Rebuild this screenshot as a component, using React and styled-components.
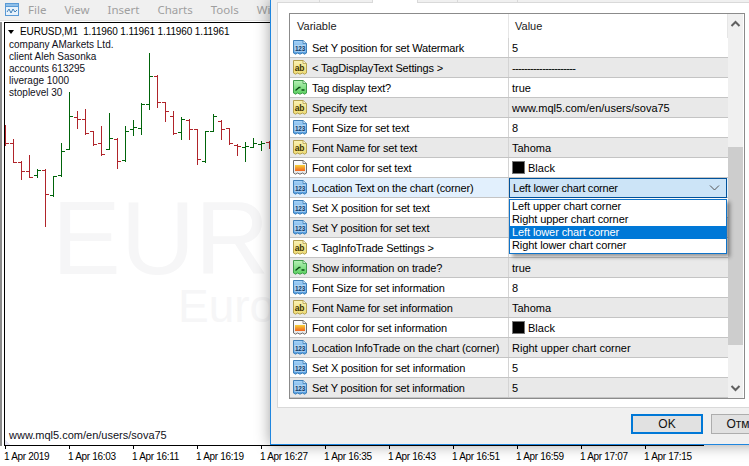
import React from "react";
import styled, { createGlobalStyle } from "styled-components";

const Global = createGlobalStyle`
  html, body { margin: 0; padding: 0; background: #fff; overflow: hidden; }
  #root { width: 749px; height: 466px; }
`;

const Page = styled.div`
  position: relative;
  width: 749px;
  height: 466px;
  overflow: hidden;
  background: #fff;
  font-family: "Liberation Sans", Arial, sans-serif;
  color: #000;
`;

const MenuBar = styled.div`
  height: 18px;
  display: flex;
  align-items: center;
  gap: 18px;
  padding: 0 0 2px 5px;
  background: #f0f0f0;
  border-bottom: 1px solid #e2e2e2;
  font-family: "Noto Sans", sans-serif;
  font-size: 11.5px;
  color: #9f9f9f;
`;

const MenuIcon = styled.svg`
  width: 15px;
  height: 15px;
  margin-right: -10px;
`;

const Workspace = styled.div`
  margin-top: 1px;
  padding-left: 4px;
  position: relative;
  &::before {
    content: "";
    position: absolute;
    left: 0;
    top: 0;
    width: 2px;
    height: 424px;
    background: #8c8c8c;
  }
`;

const ChartFrame = styled.div`
  position: relative;
  width: 699px;
  height: 422px;
  border-top: 1px solid #000;
  border-left: 1px solid #000;
  border-bottom: 1px solid #000;
  overflow: hidden;
`;

const ChartSvg = styled.svg`
  display: block;
`;

const Watermark = styled.div`
  position: absolute;
  white-space: nowrap;
  color: #f6f6f7;
  font-size: ${(p) => (p.$small ? "46px" : "103px")};
  left: ${(p) => (p.$small ? "173px" : "47px")};
  top: ${(p) => (p.$small ? "257px" : "157px")};
  line-height: 1.15;
`;

const ChartTitle = styled.div`
  position: absolute;
  left: 15px;
  top: 2px;
  font-size: 10px;
  line-height: 13px;
  white-space: pre;
  letter-spacing: -0.12px;
`;

const TitleArrow = styled.span`
  position: absolute;
  left: 3px;
  top: 7px;
  width: 0;
  height: 0;
  border-left: 3.5px solid transparent;
  border-right: 3.5px solid transparent;
  border-top: 4px solid #000;
`;

const InfoBlock = styled.div`
  position: absolute;
  left: 4px;
  top: 16px;
  font-size: 10px;
  line-height: 12px;
  color: #101020;
`;

const SiteLabel = styled.div`
  position: absolute;
  left: 4px;
  bottom: 3px;
  font-size: 11px;
  line-height: 14px;
  color: #101020;
`;

const Axis = styled.div`
  display: flex;
`;

const AxisCell = styled.div`
  flex: 0 0 64px;
  display: flex;
  flex-direction: column;
`;

const AxisTick = styled.span`
  width: 1px;
  height: 3px;
  margin-left: 1px;
  background: #000;
`;

const AxisLabel = styled.span`
  font-size: 10px;
  letter-spacing: -0.3px;
  line-height: 13px;
  margin-top: 1px;
  white-space: nowrap;
`;

const Dialog = styled.div`
  position: absolute;
  left: 270px;
  top: 0;
  width: 530px;
  height: 445px;
  box-sizing: border-box;
  background: #f0f0f0;
  border-left: 1px solid #1f86df;
  border-bottom: 1px solid #1f86df;
  box-shadow: 0 0 14px rgba(0, 0, 0, 0.38);
  display: flex;
  flex-direction: column;
`;

const TabStrip = styled.div`
  height: 2px;
  display: flex;
`;

const Tab = styled.div`
  flex: 0 0 ${(p) => p.$w}px;
  box-sizing: border-box;
  background: ${(p) => (p.$active ? "#fff" : "#f0f0f0")};
  border-right: 1px solid #d9d9d9;
  height: ${(p) => (p.$active ? "3px" : "2px")};
  position: relative;
  z-index: 1;
`;

const TabPanel = styled.div`
  margin-left: 6px;
  height: 406px;
  box-sizing: border-box;
  background: #fff;
  border: 1px solid #d9d9d9;
  padding: 10px 0 0 11px;
`;

const PropTable = styled.div`
  width: 456px;
  height: 386px;
  box-sizing: border-box;
  border: 1px solid #8b8b8b;
  display: flex;
  background: #fff;
`;

const PropList = styled.div`
  width: 438px;
  font-size: 11px;
  position: relative;
`;

const HeaderRow = styled.div`
  height: 24px;
  display: grid;
  grid-template-columns: 219px 219px;
  align-items: center;
  color: #222;
`;

const HeaderCell = styled.div`
  height: 100%;
  display: flex;
  align-items: center;
  padding-left: ${(p) => p.$pad}px;
  box-sizing: border-box;
  border-right: 1px solid #e6e6e6;
`;

const Row = styled.div`
  height: 20px;
  box-sizing: border-box;
  display: grid;
  grid-template-columns: 219px 219px;
  border-bottom: 1px solid #c4c4c4;
  background: ${(p) => (p.$selected ? "#e2f0fd" : p.$shaded ? "#e9e9e9" : "#fff")};
`;

const NameCell = styled.div`
  display: flex;
  align-items: center;
  gap: 4px;
  padding-left: 2px;
  box-sizing: border-box;
  border-right: 1px solid #d4d4d4;
  white-space: nowrap;
  height: 19px;
  letter-spacing: -0.17px;
`;

const ValueCell = styled.div`
  display: flex;
  align-items: center;
  gap: 3px;
  padding-left: 3px;
  height: 19px;
  white-space: nowrap;
  position: relative;
`;

const Dashes = styled.span`
  letter-spacing: -0.65px;
`;

const Swatch = styled.span`
  width: 13px;
  height: 13px;
  box-sizing: border-box;
  background: #000;
  border: 1px solid #777;
`;

const Combo = styled.div`
  position: absolute;
  left: 0;
  top: 0;
  width: 218px;
  height: 20px;
  box-sizing: border-box;
  border: 1px solid #00529b;
  background: #cce4f7;
  display: flex;
  align-items: center;
  justify-content: space-between;
  padding: 0 6px 0 3px;
  z-index: 2;
  letter-spacing: -0.2px;
`;

const Dropdown = styled.div`
  position: absolute;
  left: 0;
  top: 21px;
  width: 218px;
  height: 55px;
  box-sizing: border-box;
  border: 1px solid #0f73c9;
  background: #fff;
  z-index: 3;
  box-shadow: 3px 3px 4px rgba(0, 0, 0, 0.4);
  line-height: 13px;
  letter-spacing: -0.1px;
`;

const Option = styled.div`
  height: 13px;
  padding-left: 2px;
  background: ${(p) => (p.$on ? "#0078d7" : "#fff")};
  color: ${(p) => (p.$on ? "#fff" : "#000")};
`;

const ScrollBar = styled.div`
  width: 15px;
  margin-right: 1px;
  background: #f0f0f0;
  display: flex;
  flex-direction: column;
  align-items: center;
`;

const ScrollArrow = styled.svg`
  width: 15px;
  height: 16px;
  flex: none;
  margin-top: ${(p) => (p.$top ? "2px" : "0")};
`;

const ScrollGap = styled.div`
  flex: 0 0 ${(p) => p.$h}px;
  width: 100%;
  background: ${(p) => (p.$thumb ? "#cdcdcd" : "transparent")};
`;

const ButtonBar = styled.div`
  display: flex;
  gap: 8px;
  padding: 6px 0 0 360px;
`;

const Button = styled.div`
  width: ${(p) => (p.$primary ? "72px" : "74px")};
  height: 20px;
  box-sizing: border-box;
  background: #e1e1e1;
  border: ${(p) => (p.$primary ? "2px solid #0078d7" : "1px solid #adadad")};
  display: flex;
  align-items: center;
  justify-content: center;
  font-size: 12px;
  color: #111;
`;

const TypeGlyph = styled.svg`
  flex: none;
`;

const G = "#00640a";
const R = "#b0242a";
const bars = [
  [375, 435, null, 430], [417, 485, 430, 485], [484, 536, 487, 512], [465, 532, 512, 530],
  [508, 530, 526, 510], [508, 677, 510, 582], [528, 587, 585, 528], [430, 528, 526, 452],
  [276, 448, 448, 348], [333, 383, 350, 356], [327, 401, 357, 400], [393, 436, 394, 432],
  [379, 464, 428, 462], [340, 448, 447, 415], [415, 503, 417, 482], [379, 482, 480, 392],
  [361, 404, 388, 380], [310, 401, 385, 311], [159, 326, 312, 229], [226, 321, 228, 306],
  [306, 362, 307, 334], [334, 401, 349, 400], [352, 416, 395, 357], [358, 416, 360, 388],
  [386, 491, 388, 478], [393, 485, 483, 394], [343, 393, 392, 347], [360, 416, 362, 388],
  [384, 431, 385, 430], [432, 464, 434, 438], [425, 482, 440, 438], [414, 442, 440, 430],
  [424, 449, 433, 428], [422, 443, 427, 433],
];

const px = (v) => Math.round(v / 3) + 0.5;

const Bars = () => (
  <ChartSvg width="699" height="422" viewBox="5 23 699 422" shapeRendering="crispEdges">
    <polygon points="5,440 5,445 10,445" fill="#e6e6f6" />
    {bars.map(([h, l, o, c], i) => {
      const x = 5.5 + 8 * i;
      const col = o !== null && c < o ? G : R;
      return (
        <g key={i} stroke={col} fill="none">
          <line x1={x} x2={x} y1={Math.round(h / 3)} y2={Math.round(l / 3) + 1} />
          {o !== null && <line x1={x - 3.5} x2={x} y1={px(o)} y2={px(o)} />}
          <line x1={x} x2={x + 3.5} y1={px(c)} y2={px(c)} />
        </g>
      );
    })}
  </ChartSvg>
);

const IconPalette = {
  num: { top: "#a9d4f7", bottom: "#4f9be0", line: "#3f7fb8" },
  ab: { top: "#faf2b4", bottom: "#eeda72", line: "#b3a050" },
  bool: { top: "#b6f0b6", bottom: "#58d05e", line: "#3f9a4a" },
  color: { top: "#ffffff", bottom: "#e4e4e4", line: "#6a6a6a" },
};

const DocPath = "M1.5 1.5 H11 L14.5 4.5 V14 L12.5 15.2 L10.5 14 L8 15.2 L5.5 14 L3.5 15.2 L1.5 14 Z";

const TypeIcon = ({ kind }) => {
  const p = IconPalette[kind];
  const id = `grad-${kind}`;
  return (
    <TypeGlyph width="16" height="17" viewBox="0 0 16 17">
      <defs>
        <linearGradient id={id} x1="0" y1="0" x2="0" y2="1">
          <stop offset="0" stopColor={p.top} />
          <stop offset="1" stopColor={p.bottom} />
        </linearGradient>
        <linearGradient id="flame" x1="0" y1="0" x2="0" y2="1">
          <stop offset="0" stopColor="#f7d23a" />
          <stop offset="1" stopColor="#f0621e" />
        </linearGradient>
      </defs>
      <path d={DocPath} fill={`url(#${id})`} stroke={p.line} strokeWidth="1" />
      <path d="M11 1.5 V4.5 H14.5" fill="#fff" fillOpacity="0.6" stroke={p.line} strokeWidth="0.8" />
      {kind === "num" && (
        <>
          <rect x="2.5" y="6" width="11" height="7" fill="#eaf4fc" fillOpacity="0.45" />
          <text x="8" y="12" textAnchor="middle" fontSize="6.4" fontWeight="700" fontFamily="Liberation Sans" fill="#123a66">123</text>
        </>
      )}
      {kind === "ab" && (
        <text x="7.5" y="11.5" textAnchor="middle" fontSize="8.5" fontWeight="700" fontFamily="Liberation Sans" fill="#3a3200">ab</text>
      )}
      {kind === "bool" && <path d="M3.5 11.5 L7 8.5 H8.5 M9.5 11 H12.5" fill="none" stroke="#0d4a16" strokeWidth="1.4" />}
      {kind === "color" && <rect x="3" y="6" width="10" height="6" fill="url(#flame)" />}
    </TypeGlyph>
  );
};

const rows = [
  ["num", "Set Y position for set Watermark", "5"],
  ["ab", "< TagDisplayText Settings >", "---------------------"],
  ["bool", "Tag display text?", "true"],
  ["ab", "Specify text", "www.mql5.com/en/users/sova75"],
  ["num", "Font Size for set text", "8"],
  ["ab", "Font Name for set text", "Tahoma"],
  ["color", "Font color for set text", "Black"],
  ["num", "Location Text on the chart (corner)", "combo"],
  ["num", "Set X position for set text", ""],
  ["num", "Set Y position for set text", ""],
  ["ab", "< TagInfoTrade Settings >", ""],
  ["bool", "Show information on trade?", "true"],
  ["num", "Font Size for set information", "8"],
  ["ab", "Font Name for set information", "Tahoma"],
  ["color", "Font color for set information", "Black"],
  ["num", "Location InfoTrade on the chart (corner)", "Right upper chart corner"],
  ["num", "Set X position for set information", "5"],
  ["num", "Set Y position for set information", "5"],
];

const options = ["Left upper chart corner", "Right upper chart corner", "Left lower chart corner", "Right lower chart corner"];
const times = ["1 Apr 2019", "1 Apr 16:03", "1 Apr 16:11", "1 Apr 16:19", "1 Apr 16:27", "1 Apr 16:35", "1 Apr 16:43", "1 Apr 16:51", "1 Apr 16:59", "1 Apr 17:07", "1 Apr 17:15"];

const ValueContent = ({ kind, value }) => {
  if (value === "combo") {
    return (
      <>
        <Combo>
          <span>Left lower chart corner</span>
          <svg width="11" height="6" viewBox="0 0 11 6"><path d="M1 0.5 L5.5 5 L10 0.5" fill="none" stroke="#555" /></svg>
        </Combo>
        <Dropdown>
          {options.map((o, i) => <Option key={o} $on={i === 2}>{o}</Option>)}
        </Dropdown>
      </>
    );
  }
  if (value.startsWith("---")) return <Dashes>{value}</Dashes>;
  return (
    <>
      {kind === "color" && <Swatch />}
      <span>{value}</span>
    </>
  );
};

export default function App() {
  return (
    <Page>
      <Global />
      <MenuBar>
        <MenuIcon viewBox="0 0 15 15">
          <rect x="0.5" y="1.5" width="13" height="12" fill="#e8f2fb" stroke="#5a9ad6" />
          <rect x="0.5" y="1.5" width="13" height="3" fill="#8fbfe8" stroke="#5a9ad6" />
          <path d="M2 10 L4 7 L6 11 L8 7 L10 10 L12 8" fill="none" stroke="#3f7fb8" />
        </MenuIcon>
        <span>File</span>
        <span>View</span>
        <span>Insert</span>
        <span>Charts</span>
        <span>Tools</span>
        <span>Window</span>
      </MenuBar>
      <Workspace>
        <ChartFrame>
          <Bars />
          <Watermark>EUR</Watermark>
          <Watermark $small>Euro</Watermark>
          <TitleArrow />
          <ChartTitle>EURUSD,M1  1.11960 1.11961 1.11960 1.11961</ChartTitle>
          <InfoBlock>
            <div>company AMarkets Ltd.</div>
            <div>client Aleh Sasonka</div>
            <div>accounts 613295</div>
            <div>liverage 1000</div>
            <div>stoplevel 30</div>
          </InfoBlock>
          <SiteLabel>www.mql5.com/en/users/sova75</SiteLabel>
        </ChartFrame>
        <Axis>
          {times.map((t) => (
            <AxisCell key={t}>
              <AxisTick />
              <AxisLabel>{t}</AxisLabel>
            </AxisCell>
          ))}
        </Axis>
      </Workspace>
      <Dialog>
        <TabStrip>
          <Tab $w={49} />
          <Tab $w={53} />
          <Tab $w={45} $active />
          <Tab $w={40} />
          <Tab $w={60} />
        </TabStrip>
        <TabPanel>
          <PropTable>
            <PropList>
              <HeaderRow>
                <HeaderCell $pad={7}>Variable</HeaderCell>
                <HeaderCell $pad={6}>Value</HeaderCell>
              </HeaderRow>
              {rows.map(([kind, name, value], i) => (
                <Row key={name} $shaded={i % 2 === 1} $selected={value === "combo"}>
                  <NameCell><TypeIcon kind={kind} /><span>{name}</span></NameCell>
                  <ValueCell><ValueContent kind={kind} value={value} /></ValueCell>
                </Row>
              ))}
            </PropList>
            <ScrollBar>
              <ScrollArrow $top viewBox="0 0 15 16"><path d="M3.5 10 L7.5 6 L11.5 10" fill="none" stroke="#606060" strokeWidth="2" /></ScrollArrow>
              <ScrollGap $h={115} />
              <ScrollGap $h={198} $thumb />
              <ScrollGap $h={35} />
              <ScrollArrow viewBox="0 0 15 16"><path d="M3.5 6 L7.5 10 L11.5 6" fill="none" stroke="#606060" strokeWidth="2" /></ScrollArrow>
            </ScrollBar>
          </PropTable>
        </TabPanel>
        <ButtonBar>
          <Button $primary>OK</Button>
          <Button>Отмена</Button>
        </ButtonBar>
      </Dialog>
    </Page>
  );
}
